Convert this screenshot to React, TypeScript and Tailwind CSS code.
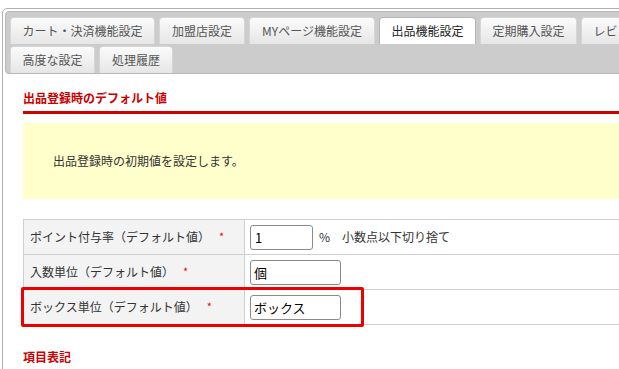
const rowOne = [
  { label: 'カート・決済機能設定', w: 'w-[145px]' },
  { label: '加盟店設定', w: 'w-[86px]' },
  { label: 'MYページ機能設定', w: 'w-[126px]' },
  { label: '出品機能設定', w: 'w-[97px]', active: true },
  { label: '定期購入設定', w: 'w-[97px]' },
  { label: 'レビュー設定', w: 'w-[97px]' },
];

const rowTwo = [
  { label: '高度な設定', w: 'w-[85px]' },
  { label: '処理履歴', w: 'w-[74px]' },
];

function Tab({ label, w, active }: { label: string; w: string; active?: boolean }) {
  return (
    <div
      className={
        active
          ? `${w} h-[27px] shrink-0 flex items-center justify-center rounded-t-[4px] border border-b-0 border-[#b5b5b5] bg-white text-[#222]`
          : `${w} h-[27px] shrink-0 flex items-center justify-center rounded-t-[4px] border border-b-0 border-[#d6d6d6] bg-gradient-to-b from-[#fbfbfb] to-[#e6e6e6] text-[#555]`
      }
    >
      {label}
    </div>
  );
}

function Req() {
  return <span className="ml-[9px] text-[11px] text-[#f00] align-top">*</span>;
}

export default function App() {
  return (
    <div className="w-[619px] h-[369px] overflow-hidden bg-white text-[12px] text-[#333] font-['Noto_Sans_CJK_JP','Liberation_Sans',sans-serif]">
      <div className="ml-[2px] mt-[8px] w-[760px] rounded-tl-[5px] border border-[#b0b0b0] px-[2px] pt-[2px] pb-[40px]">
        {/* tab bar */}
        <div className="rounded-[4px] border border-[#b8b8b8] bg-[#cccccc] pl-[4px] pt-[5px] flex flex-col gap-[2px]">
          <div className="flex gap-[4px]">
            {rowOne.map((t) => (
              <Tab key={t.label} {...t} />
            ))}
          </div>
          <div className="flex gap-[4px]">
            {rowTwo.map((t) => (
              <Tab key={t.label} {...t} />
            ))}
          </div>
        </div>

        <div className="pl-[18px]">
          <h2 className="mt-[16px] leading-[16px] pb-[5px] border-b-[3px] border-[#cc0000] text-[12px] font-bold text-[#cc0000]">
            出品登録時のデフォルト値
          </h2>

          <div className="mt-[9px] h-[76px] bg-[#ffffcc] pl-[30px] flex items-center">
            出品登録時の初期値を設定します。
          </div>

          <div className="relative mt-[20px]">
            <table className="w-full border-collapse">
              <tbody>
                <tr className="h-[35px]">
                  <th className="w-[221px] border border-[#cfcfcf] bg-[#f2f3f2] pl-[6px] text-left font-normal">
                    ポイント付与率（デフォルト値）<Req />
                  </th>
                  <td className="border border-[#cfcfcf] pl-[5px]">
                    <div className="flex items-center">
                      <input
                        defaultValue="1"
                        className="w-[63px] h-[25px] rounded-[3px] border border-[#8a8a8a] px-[4px] text-[13px] text-black outline-none"
                      />
                      <span className="ml-[6px]">%</span>
                      <span className="ml-[12px]">小数点以下切り捨て</span>
                    </div>
                  </td>
                </tr>
                <tr className="h-[35px]">
                  <th className="border border-[#cfcfcf] bg-[#f2f3f2] pl-[6px] text-left font-normal">
                    入数単位（デフォルト値）<Req />
                  </th>
                  <td className="border border-[#cfcfcf] pl-[5px]">
                    <input
                      defaultValue="個"
                      className="w-[91px] h-[25px] rounded-[3px] border border-[#8a8a8a] px-[3px] text-[13px] text-black outline-none"
                    />
                  </td>
                </tr>
                <tr className="h-[35px]">
                  <th className="border border-[#cfcfcf] bg-[#f2f3f2] pl-[6px] text-left font-normal">
                    ボックス単位（デフォルト値）<Req />
                  </th>
                  <td className="border border-[#cfcfcf] pl-[5px]">
                    <input
                      defaultValue="ボックス"
                      className="w-[91px] h-[25px] rounded-[3px] border border-[#8a8a8a] px-[3px] text-[13px] text-black outline-none"
                    />
                  </td>
                </tr>
              </tbody>
            </table>
            {/* highlight box */}
            <div className="absolute left-[-2px] top-[68px] w-[343px] h-[40px] rounded-[2px] border-[3px] border-[#ee0000] pointer-events-none" />
          </div>

          <h3 className="mt-[24px] leading-[16px] text-[12px] font-bold text-[#cc0000]">項目表記</h3>
        </div>
      </div>
    </div>
  );
}
